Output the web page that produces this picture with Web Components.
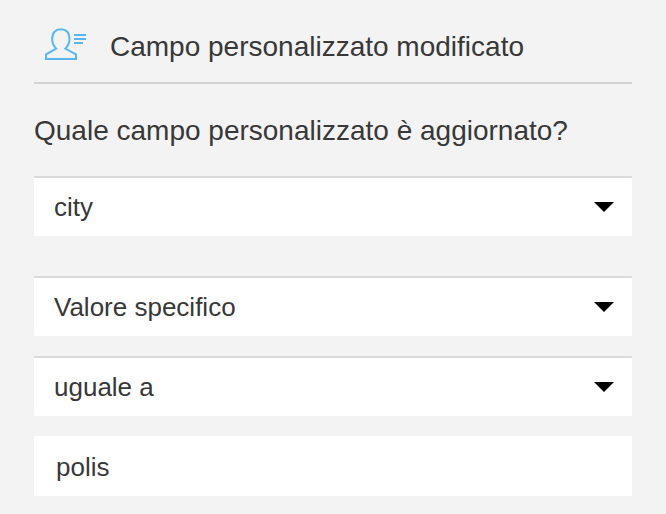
<!DOCTYPE html>
<html lang="it">
<head>
<meta charset="utf-8">
<title>Campo personalizzato modificato</title>
<style>
  body {
    margin: 0;
    background-color: #f3f3f3;
    color: #383838;
    font-family: "Liberation Sans", Arial, sans-serif;
    font-size: 26px;
  }
</style>
</head>
<body>
<trigger-panel>
  <panel-header slot="header">Campo personalizzato modificato</panel-header>
  <span slot="question">Quale campo personalizzato è aggiornato?</span>
  <select-field>city</select-field>
  <select-field class="value">Valore specifico</select-field>
  <select-field>uguale a</select-field>
  <text-field>polis</text-field>
</trigger-panel>
<script>
window.customElements.define(
  "trigger-panel",
  class extends HTMLElement {
    constructor() {
      super();
      const root = this.attachShadow({ mode: "open" });
      root.innerHTML = `
    <style>
      :host {
        display: block;
        box-sizing: border-box;
        height: 514px;
        padding: 0 34px;
      }
      .question {
        height: 92px;
        line-height: 94px;
        font-size: 28px;
        white-space: nowrap;
      }
      .fields {
        display: flex;
        flex-direction: column;
        gap: 20px;
      }
      ::slotted(.value) {
        margin-top: 20px;
      }
    </style>
    <slot name="header"></slot>
    <div class="question"><slot name="question"></slot></div>
    <div class="fields"><slot></slot></div>
    `;
    }
  }
);

window.customElements.define(
  "panel-header",
  class extends HTMLElement {
    constructor() {
      super();
      const root = this.attachShadow({ mode: "open" });
      root.innerHTML = `
    <style>
      :host {
        display: flex;
        box-sizing: border-box;
        height: 84px;
        padding: 10px 0 0 10px;
        border-bottom: 2px solid #d3d3d3;
        font-size: 28px;
        line-height: 74px;
        white-space: nowrap;
      }
      svg {
        flex: none;
        width: 44px;
        height: 36px;
        margin: 16px 22px 0 0;
        fill: none;
        stroke: #57b7ee;
        stroke-width: 2;
      }
    </style>
    <svg viewBox="0 0 44 36">
      <path d="M12.200 22.600C9.500 20 8.200 17 8.200 13C8.200 6.500 11.500 3.300 16.700 3.300S25.500 6.500 25.500 13C25.500 17 24 20 21.300 22.600L32 28.300V33H2V28.300Z"/>
      <path d="M30 9H42M30 13H42M30 17H39"/>
    </svg>
    <slot></slot>
    `;
    }
  }
);

window.customElements.define(
  "select-field",
  class extends HTMLElement {
    constructor() {
      super();
      const root = this.attachShadow({ mode: "open" });
      root.innerHTML = `
    <style>
      :host {
        display: flex;
        align-items: center;
        justify-content: space-between;
        box-sizing: border-box;
        height: 60px;
        padding: 0 18px 0 20px;
        border: 0 solid #fff;
        border-top: 2px solid #dadada;
        border-radius: 1px;
        background-color: #fff;
        line-height: 58px;
      }
      svg {
        width: 20px;
        height: 10px;
      }
    </style>
    <span><slot></slot></span>
    <svg viewBox="0 0 20 10"><path d="M0 0H20L10 10Z"/></svg>
    `;
    }
  }
);

window.customElements.define(
  "text-field",
  class extends HTMLElement {
    constructor() {
      super();
      const root = this.attachShadow({ mode: "open" });
      root.innerHTML = `
    <style>
      :host {
        display: block;
        box-sizing: border-box;
        height: 60px;
        padding: 2px 22px 0;
        background-color: #fff;
        line-height: 58px;
      }
    </style>
    <slot></slot>
    `;
    }
  }
);
</script>
</body>
</html>
